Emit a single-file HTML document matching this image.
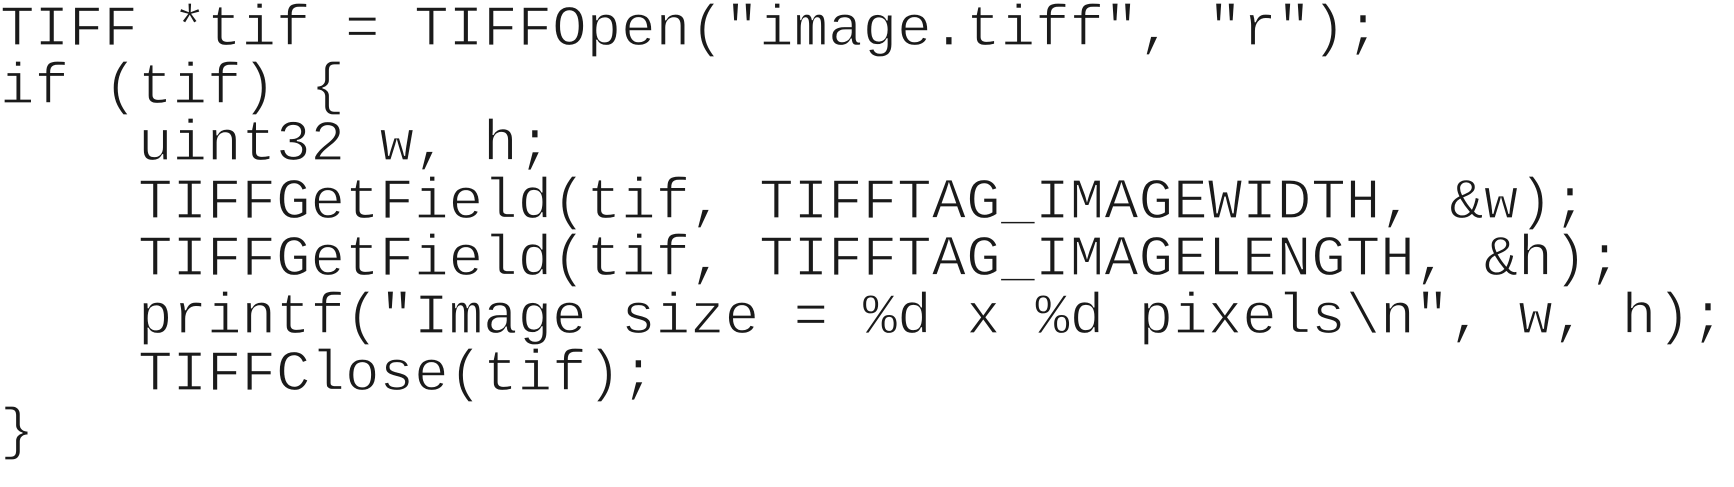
<!DOCTYPE html>
<html><head><meta charset="utf-8"><style>
html,body{margin:0;padding:0;background:#fff;width:1734px;height:487px;overflow:hidden}
pre{margin:0;position:absolute;left:0;top:2px;font-family:"Liberation Mono",monospace;font-size:57.5px;line-height:57.5px;color:#1a1a1a;-webkit-text-stroke:1.2px #fff;paint-order:normal}
</style></head><body><pre>TIFF *tif = TIFFOpen("image.tiff", "r");
if (tif) {
    uint32 w, h;
    TIFFGetField(tif, TIFFTAG_IMAGEWIDTH, &amp;w);
    TIFFGetField(tif, TIFFTAG_IMAGELENGTH, &amp;h);
    printf("Image size = %d x %d pixels\n", w, h);
    TIFFClose(tif);
}</pre></body></html>
